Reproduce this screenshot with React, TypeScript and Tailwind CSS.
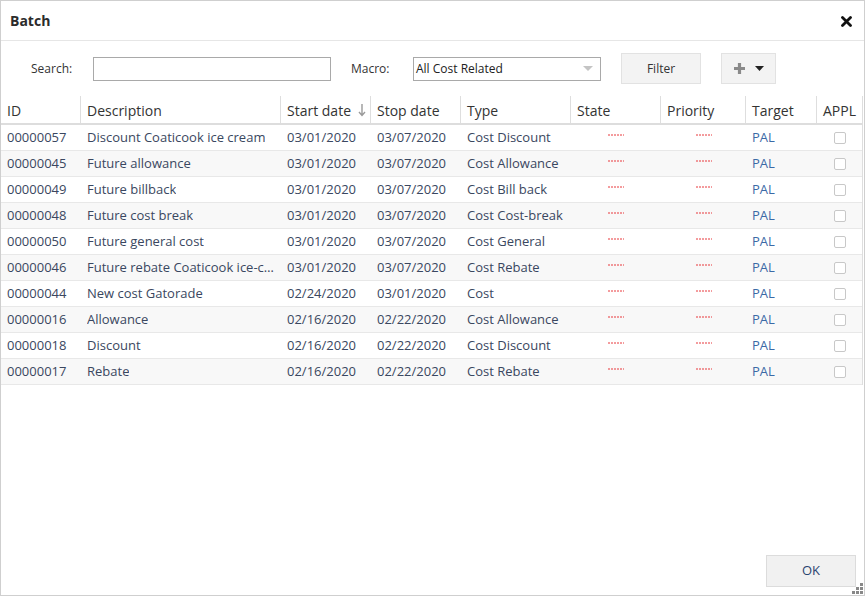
import React from "react";

const cols = [
  { key: "id", label: "ID", w: "w-[80px]" },
  { key: "desc", label: "Description", w: "w-[200px]" },
  { key: "start", label: "Start date", w: "w-[90px]" },
  { key: "stop", label: "Stop date", w: "w-[90px]" },
  { key: "type", label: "Type", w: "w-[110px]" },
  { key: "state", label: "State", w: "w-[90px]" },
  { key: "prio", label: "Priority", w: "w-[85px]" },
  { key: "target", label: "Target", w: "w-[71px]" },
  { key: "appl", label: "APPL", w: "w-[45px]" },
];

const rows = [
  ["00000057", "Discount Coaticook ice cream", "03/01/2020", "03/07/2020", "Cost Discount"],
  ["00000045", "Future allowance", "03/01/2020", "03/07/2020", "Cost Allowance"],
  ["00000049", "Future billback", "03/01/2020", "03/07/2020", "Cost Bill back"],
  ["00000048", "Future cost break", "03/01/2020", "03/07/2020", "Cost Cost-break"],
  ["00000050", "Future general cost", "03/01/2020", "03/07/2020", "Cost General"],
  ["00000046", "Future rebate Coaticook ice-cream", "03/01/2020", "03/07/2020", "Cost Rebate"],
  ["00000044", "New cost Gatorade", "02/24/2020", "03/01/2020", "Cost"],
  ["00000016", "Allowance", "02/16/2020", "02/22/2020", "Cost Allowance"],
  ["00000018", "Discount", "02/16/2020", "02/22/2020", "Cost Discount"],
  ["00000017", "Rebate", "02/16/2020", "02/22/2020", "Cost Rebate"],
];

function Dash() {
  return (
    <svg width="16" height="2" viewBox="0 0 16 2" className="-translate-y-[3px]">
      <line x1="0" y1="1" x2="16" y2="1" stroke="#e8383d" strokeWidth="1" strokeDasharray="2 1" />
    </svg>
  );
}

export default function App() {
  return (
    <div
      className="relative w-[865px] h-[596px] border border-[#cfcfcf] bg-white flex flex-col text-[#333]"
      style={{ fontFamily: '"Open Sans", "Liberation Sans", sans-serif' }}
    >
      {/* Title bar */}
      <div className="h-[40px] border-b border-[#e6e6e6] flex items-center justify-between pl-[9px] pr-[12px] shrink-0">
        <span className="text-[14px] font-bold text-[#2b2b2b]">Batch</span>
        <svg width="11" height="11" viewBox="0 0 11 11" className="mt-[1px]">
          <path d="M1.5 1.5 L9.5 9.5 M9.5 1.5 L1.5 9.5" stroke="#111" strokeWidth="2.8" strokeLinecap="round" />
        </svg>
      </div>

      {/* Toolbar */}
      <div className="mt-[12px] h-[31px] flex items-center pl-[30px] shrink-0">
        <span className="w-[62px] text-[12px] text-[#333]">Search:</span>
        <div className="w-[238px] h-[24px] border border-[#a9a9a9] bg-white" />
        <span className="ml-[20px] w-[62px] text-[12px] text-[#333]">Macro:</span>
        <div className="w-[188px] h-[24px] border border-[#a9a9a9] bg-white flex items-center justify-between pl-[2px] pr-[7px]">
          <span className="text-[12px] text-[#222] pt-[1px]">All Cost Related</span>
          <svg width="10" height="6" viewBox="0 0 10 6">
            <path d="M0 0 L10 0 L5 5 Z" fill="#c4c4c4" />
          </svg>
        </div>
        <div className="ml-[20px] w-[80px] h-[31px] bg-[#f3f3f3] border border-[#e2e2e2] flex items-center justify-center text-[12px] text-[#333]">
          Filter
        </div>
        <div className="ml-[20px] w-[55px] h-[31px] bg-[#f3f3f3] border border-[#e2e2e2] flex items-center justify-center gap-[9px]">
          <svg width="13" height="13" viewBox="0 0 13 13">
            <path d="M6.5 1 V12 M1 6.5 H12" stroke="#8a8a8a" strokeWidth="3.2" />
          </svg>
          <svg width="9" height="6" viewBox="0 0 9 6">
            <path d="M0 0 L9 0 L4.5 5 Z" fill="#222" />
          </svg>
        </div>
      </div>

      {/* Table */}
      <div className="mt-[12px] w-[862px] border-r border-[#dedede] shrink-0">
        <div className="h-[29px] flex border-b-2 border-[#dddddd]">
          {cols.map((c, i) => (
            <div
              key={c.key}
              className={`${c.w} h-[27px] flex items-center pl-[6px] pt-[1px] text-[14px] text-[#333] ${i < cols.length - 1 ? "border-r border-[#dedede]" : ""}`}
            >
              <span>{c.label}</span>
              {c.key === "start" && (
                <svg width="8" height="14" viewBox="0 0 8 14" className="ml-[7px]">
                  <path d="M4 1 V12 M1 9 L4 12.5 L7 9" stroke="#9a9a9a" strokeWidth="1.4" fill="none" />
                </svg>
              )}
            </div>
          ))}
        </div>
        {rows.map((r, ri) => (
          <div
            key={r[0]}
            className={`h-[26px] flex border-b border-[#e8e8e8] text-[13px] pt-[1px] ${ri % 2 === 1 ? "bg-[#f8f8f8]" : "bg-white"}`}
          >
            <div className="w-[80px] pl-[6px] flex items-center text-[#3a4760]">{r[0]}</div>
            <div className="w-[200px] pl-[6px] pr-[4px] flex items-center text-[#3a4760] overflow-hidden">
              <span className="truncate">{r[1]}</span>
            </div>
            <div className="w-[90px] pl-[6px] flex items-center text-[#3a4760]">{r[2]}</div>
            <div className="w-[90px] pl-[6px] flex items-center text-[#3a4760]">{r[3]}</div>
            <div className="w-[110px] pl-[6px] flex items-center text-[#3a4760]">{r[4]}</div>
            <div className="w-[90px] flex items-center justify-center">
              <Dash />
            </div>
            <div className="w-[85px] flex items-center justify-center">
              <Dash />
            </div>
            <div className="w-[71px] pl-[6px] flex items-center text-[#3b6aa6]">PAL</div>
            <div className="w-[45px] flex items-center justify-center pl-[1px]">
              <div className="w-[12px] h-[12px] rounded-[2px] border border-[#c8c8c8] bg-white" />
            </div>
          </div>
        ))}
      </div>

      <div className="flex-1" />

      {/* Footer */}
      <div className="flex justify-end pr-[8px] pb-[8px] shrink-0">
        <div className="w-[90px] h-[32px] bg-[#f1f1f1] border border-[#dcdcdc] flex items-center justify-center text-[13px] text-[#2a4470]">
          OK
        </div>
      </div>

      {/* Resize grip */}
      <div className="absolute right-[1px] bottom-[1px] grid grid-cols-3 gap-[1px]">
        <span className="w-[3px] h-[3px]" />
        <span className="w-[3px] h-[3px]" />
        <span className="w-[3px] h-[3px] bg-[#888]" />
        <span className="w-[3px] h-[3px]" />
        <span className="w-[3px] h-[3px] bg-[#888]" />
        <span className="w-[3px] h-[3px] bg-[#888]" />
        <span className="w-[3px] h-[3px] bg-[#888]" />
        <span className="w-[3px] h-[3px] bg-[#888]" />
        <span className="w-[3px] h-[3px] bg-[#888]" />
      </div>
    </div>
  );
}
